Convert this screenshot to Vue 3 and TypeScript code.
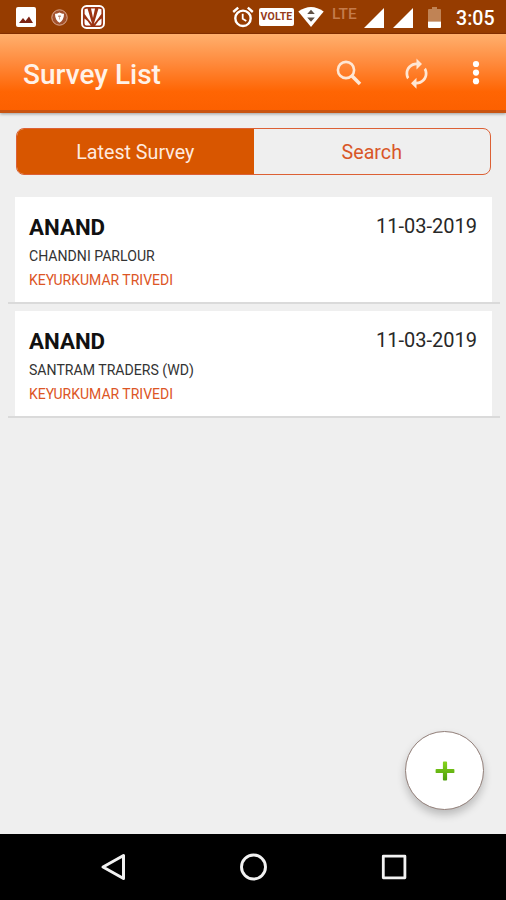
<script setup lang="ts">
import { ref } from 'vue'

interface Survey {
  id: number
  city: string
  shop: string
  agent: string
  date: string
}

const tabs: string[] = ['Latest Survey', 'Search']
const active = ref<string>('Latest Survey')

const surveys: Survey[] = [
  { id: 1, city: 'ANAND', shop: 'CHANDNI PARLOUR', agent: 'KEYURKUMAR TRIVEDI', date: '11-03-2019' },
  { id: 2, city: 'ANAND', shop: 'SANTRAM TRADERS (WD)', agent: 'KEYURKUMAR TRIVEDI', date: '11-03-2019' },
]
</script>

<template>
  <div class="screen">
    <div class="status">
      <div class="status-group">
        <svg width="20" height="20" viewBox="0 0 20 20">
          <rect width="20" height="20" rx="2" fill="#fff" />
          <path d="M3 16 L7 11 L9.5 14 L13 9.5 L17 16 Z" fill="#7c2413" />
        </svg>
        <svg class="shield" width="17" height="17" viewBox="0 0 17 17">
          <circle cx="8.5" cy="8.5" r="7.7" fill="#a3512d" stroke="#d9a890" stroke-width="1" />
          <path d="M8.5 3.6 C10 4.5 11.5 4.8 13 4.8 C13 9 11.5 12 8.5 13.8 C5.5 12 4 9 4 4.8 C5.5 4.8 7 4.5 8.5 3.6 Z" fill="#fff" />
          <path d="M7.2 6.6 H9.8 V8 H8.8 V10.5 H8.1 V8 H7.2 Z" fill="#b98570" />
        </svg>
        <svg class="app" width="24" height="24" viewBox="0 0 24 24">
          <rect x="1" y="1" width="22" height="22" rx="4.5" fill="#9b3312" stroke="#fff" stroke-width="1.9" />
          <path d="M3.6 4.2 L6.5 3.6 L11.2 19 Q7 14 3.6 9 Z M10 3.5 H14 L12 13 Z M20.4 4.2 L17.5 3.6 L12.8 19 Q17 14 20.4 9 Z M3.5 13.5 Q7 15.5 9.8 20.5 H5.5 Q3.5 20.5 3.5 18.2 Z M20.5 13.5 Q17 15.5 14.2 20.5 H18.5 Q20.5 20.5 20.5 18.2 Z" fill="#fff" />
        </svg>
      </div>
      <div class="status-group">
        <svg width="22" height="22" viewBox="0 0 22 22" fill="none" stroke="#fff">
          <circle cx="11" cy="12.3" r="7.7" stroke-width="2.4" />
          <path d="M1.2 6 L6.2 1.7 M20.8 6 L15.8 1.7" stroke-width="2.4" />
          <path d="M10.7 7.8 V12.8 L14.3 15" stroke-width="1.8" />
        </svg>
        <span class="volte">VOLTE</span>
        <svg class="wifi" width="26" height="20" viewBox="0 0 26 20">
          <path d="M0.3 4.6 Q13 -4.4 25.7 4.6 L13 20 Z" fill="#fff" />
          <path d="M9.2 7 L13 2.8 L16.8 7 Z M9.2 10.5 H16.8 L13 14.8 Z" fill="#5f5146" />
        </svg>
        <span class="lte">LTE</span>
        <svg class="sig1" width="20" height="20" viewBox="0 0 20 20"><path d="M20 0 V20 H0 Z" fill="#fff" /></svg>
        <svg class="sig2" width="20" height="20" viewBox="0 0 20 20"><path d="M20 0 V20 H0 Z" fill="#fff" /></svg>
        <svg class="battery" width="13" height="21" viewBox="0 0 13 21">
          <path d="M1 2 H4 V0 H9 V2 H12 Q13 2 13 3 V14.5 H0 V3 Q0 2 1 2 Z" fill="#c08355" />
          <path d="M0 14.5 H13 V20 Q13 21 12 21 H1 Q0 21 0 20 Z" fill="#fff" />
        </svg>
        <span class="clock">3:05</span>
      </div>
    </div>

    <header class="bar">
      <h1>Survey List</h1>
      <div class="actions">
        <svg width="26" height="26" viewBox="0 0 26 26" fill="none" stroke="#ffe6d3">
          <circle cx="10" cy="10" r="8.1" stroke-width="2.6" />
          <path d="M15.8 15.8 L24 24" stroke-width="3.6" />
        </svg>
        <svg class="sync" width="33" height="33" viewBox="0 0 24 24" fill="#ffe6d3">
          <path d="M12 6v3l4-4-4-4v3c-4.42 0-8 3.58-8 8 0 1.57.46 3.03 1.24 4.26L6.7 14.8c-.45-.83-.7-1.79-.7-2.8 0-3.31 2.69-6 6-6zm6.76 1.74L17.3 9.2c.44.84.7 1.79.7 2.8 0 3.31-2.69 6-6 6v-3l-4 4 4 4v-3c4.42 0 8-3.58 8-8 0-1.57-.46-3.03-1.24-4.26z" />
        </svg>
        <svg class="more" width="8" height="26" viewBox="0 0 8 26" fill="#fff">
          <circle cx="4" cy="4" r="3.1" /><circle cx="4" cy="12.6" r="3.1" /><circle cx="4" cy="21.2" r="3.1" />
        </svg>
      </div>
    </header>

    <main>
      <div class="tabs">
        <button v-for="tab in tabs" :key="tab" class="tab" :class="{ on: tab === active }" @click="active = tab">{{ tab }}</button>
      </div>
      <ul class="list">
        <li v-for="s in surveys" :key="s.id">
          <article class="card">
            <div class="details">
              <h2>{{ s.city }}</h2>
              <p>{{ s.shop }}</p>
              <p class="agent">{{ s.agent }}</p>
            </div>
            <time>{{ s.date }}</time>
          </article>
        </li>
      </ul>
      <button class="fab" aria-label="Add">
        <svg width="20" height="20" viewBox="0 0 20 20">
          <defs>
            <linearGradient id="plus" x1="0" y1="0" x2="0" y2="1">
              <stop offset="0" stop-color="#86d41c" /><stop offset="1" stop-color="#4d9e0c" />
            </linearGradient>
          </defs>
          <path d="M7.9 1.5 Q7.9 0.6 8.8 0.6 H11.2 Q12.1 0.6 12.1 1.5 V7.9 H18.5 Q19.4 7.9 19.4 8.8 V11.2 Q19.4 12.1 18.5 12.1 H12.1 V18.5 Q12.1 19.4 11.2 19.4 H8.8 Q7.9 19.4 7.9 18.5 V12.1 H1.5 Q0.6 12.1 0.6 11.2 V8.8 Q0.6 7.9 1.5 7.9 H7.9 Z" fill="url(#plus)" />
        </svg>
      </button>
    </main>

    <nav class="nav">
      <svg width="28" height="30" viewBox="0 0 28 30" fill="none" stroke="#f2f2f2" stroke-width="3" stroke-linejoin="round"><path d="M23.5 3.5 V26.5 L3 15 Z" /></svg>
      <svg width="28" height="30" viewBox="0 0 28 30" fill="none" stroke="#f2f2f2" stroke-width="2.9"><circle cx="13.5" cy="15" r="12" /></svg>
      <svg width="28" height="30" viewBox="0 0 28 30" fill="none" stroke="#f2f2f2" stroke-width="2.8" stroke-linejoin="round"><rect x="3.3" y="4.2" width="21.6" height="21.6" /></svg>
    </nav>
  </div>
</template>

<style>
body { margin: 0; }
</style>

<style scoped>
* { box-sizing: border-box; margin: 0; padding: 0; }
svg { display: block; flex: none; }
.screen { width: 506px; height: 900px; display: flex; flex-direction: column; background: #efefef; font-family: Roboto, "Liberation Sans", sans-serif; overflow: hidden; white-space: nowrap; }
.status { height: 34px; flex: none; display: flex; justify-content: space-between; padding: 0 11px 0 16px; background: #963c00; border-bottom: 1px solid #8a3100; color: #fff; }
.status-group { display: flex; align-items: center; padding-top: 1px; }
.shield { margin-left: 15px; }
.app { margin-left: 13px; }
.volte { margin-left: 5px; width: 35px; height: 18px; border-radius: 2px; background: #fff; color: #963c1c; font: 700 10.5px/18px Roboto, sans-serif; letter-spacing: .2px; text-align: center; }
.wifi { margin-left: 4px; }
.lte { margin: -7px 0 0 8px; width: 25px; font-size: 15.5px; font-weight: 500; line-height: 18px; color: #c47b4b; }
.sig1 { margin: 1px 0 0 7px; }
.sig2 { margin: 1px 0 0 9px; }
.battery { margin: 1px 0 0 15px; }
.clock { margin: 3px 0 0 15px; width: 39px; font-size: 19.6px; font-weight: 500; line-height: 24px; }
.bar { height: 79px; flex: none; display: flex; justify-content: space-between; align-items: flex-start; padding: 0 26px 0 23px; background: linear-gradient(#ffb06e 0, #ff8a3c 38%, #ff6503 76%, #fc6000 100%); border-bottom: 3px solid #c95411; box-shadow: 0 1px 3px rgba(0, 0, 0, .35); }
h1 { margin-top: 25px; font-size: 28px; line-height: 32px; font-weight: 500; color: #fff2e8; }
.actions { display: flex; align-items: center; margin-top: 22px; height: 34px; }
.sync { margin-left: 38px; }
.more { margin-left: 39px; }
main { flex: 1; display: flex; flex-direction: column; padding: 15px 8px 0; }
.tabs { display: flex; height: 47px; margin: 0 7px 0 8px; border: 1.5px solid #dc6034; border-radius: 8px; overflow: hidden; flex: none; }
.tab { flex: 1; border: 0; padding-top: 2px; background: transparent; font: 400 19.7px/44px Roboto, sans-serif; color: #d95728; }
.tab.on { background: #d85600; color: #ffe9de; }
.list { list-style: none; margin: 22px -2px 0 0; }
.list li { height: 107px; padding: 0 8px 0 7px; border-bottom: 2px solid #dadada; margin-bottom: 7px; }
.card { display: flex; justify-content: space-between; height: 105px; padding: 17px 15px 0 14px; background: #fff; }
h2 { font-size: 22.3px; line-height: 26px; font-weight: 700; color: #111; }
p { font-size: 14.1px; line-height: 20px; margin-top: 6px; color: #333; }
.agent { margin-top: 3.5px; font-size: 14px; color: #dc5525; }
time { font-size: 20px; line-height: 24px; color: #282828; }
.fab { align-self: flex-end; margin: auto 14px 24px 0; width: 79px; height: 79px; border-radius: 50%; border: 1px solid #927f79; background: #fff; box-shadow: 0 5px 8px rgba(0, 0, 0, .22); display: flex; align-items: center; justify-content: center; }
.nav { height: 66px; flex: none; display: flex; justify-content: center; align-items: center; gap: 112px; background: #000; padding-left: 1px; }
</style>
